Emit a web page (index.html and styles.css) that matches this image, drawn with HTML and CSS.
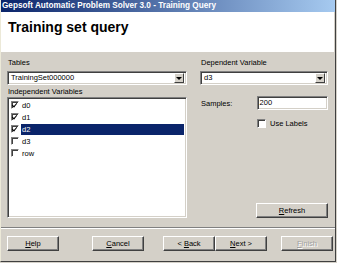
FILE: index.html
```html
<!DOCTYPE html>
<html lang="en">
<head>
  <meta charset="UTF-8">
  <title>Training Query</title>
  <link rel="stylesheet" href="styles.css">
</head>
<body>
  <div class="window">
    <div class="titlebar">Gepsoft Automatic Problem Solver 3.0 - Training Query</div>

    <!-- Wizard header -->
    <div class="header">
      <h1>Training set query</h1>
    </div>

    <div class="content">
      <div class="panel">
        <!-- Left column -->
        <div class="col-left">
          <div class="label">Tables</div>
          <div class="combo">
            <span class="combo-text">TrainingSet000000</span>
            <span class="combo-btn"><span class="arrow"></span></span>
          </div>
          <div class="label label-gap">Independent Variables</div>
          <div class="listbox">
            <div class="item"><span class="check checked"></span><span class="item-text">d0</span></div>
            <div class="item"><span class="check checked"></span><span class="item-text">d1</span></div>
            <div class="item"><span class="check checked"></span><span class="item-text selected">d2</span></div>
            <div class="item"><span class="check"></span><span class="item-text">d3</span></div>
            <div class="item"><span class="check"></span><span class="item-text">row</span></div>
          </div>
        </div>

        <!-- Right column -->
        <div class="col-right">
          <div class="label">Dependent Variable</div>
          <div class="combo">
            <span class="combo-text">d3</span>
            <span class="combo-btn"><span class="arrow"></span></span>
          </div>
          <div class="samples-row">
            <span class="samples-label">Samples:</span>
            <div class="textbox">200</div>
          </div>
          <div class="labels-row">
            <span class="check"></span><span>Use Labels</span>
          </div>
          <div class="spacer"></div>
          <div class="refresh-row">
            <button class="btn btn-refresh"><u>R</u>efresh</button>
          </div>
        </div>
      </div>

      <div class="separator"></div>

      <div class="buttons">
        <button class="btn"><u>H</u>elp</button>
        <button class="btn btn-cancel"><u>C</u>ancel</button>
        <button class="btn btn-back">&lt; <u>B</u>ack</button>
        <button class="btn"><u>N</u>ext &gt;</button>
        <button class="btn btn-finish" disabled><u>F</u>inish</button>
      </div>
    </div>
  </div>
</body>
</html>
```

FILE: styles.css
```css
body {
  margin: 0;
  width: 337px;
  height: 263px;
  overflow: hidden;
  background-color: #d4d0c8;
  font-family: "Liberation Sans", Arial, sans-serif;
  font-size: 7.5px;
  color: #000;
}
.window {
  width: 334px;
  height: 261px;
  border-left: 1px solid #ece9d8;
  border-right: 1px solid #404040;
  border-bottom: 1px solid #404040;
  display: flex;
  flex-direction: column;
  background-color: #d4d0c8;
}
.titlebar {
  height: 12px;
  line-height: 12px;
  padding-left: 1px;
  color: #fff;
  font-size: 8.2px;
  font-weight: bold;
  background: linear-gradient(to right, #0a246a, #a6caf0);
  white-space: nowrap;
}
.header {
  height: 40px;
  background-color: #fff;
  border-right: 1px solid #d4d0c8;
}
.header h1 {
  margin: 0;
  padding: 7px 0 0 7px;
  font-size: 14px;
  line-height: 16px;
  font-weight: bold;
}
.content {
  flex: 1;
  display: flex;
  flex-direction: column;
}
.panel {
  display: flex;
  gap: 13px;
  padding: 5px 0 0 6px;
  height: 170px;
}
.col-left {
  width: 180px;
  display: flex;
  flex-direction: column;
}
.col-right {
  width: 128px;
  display: flex;
  flex-direction: column;
}
.label {
  height: 11px;
  line-height: 11px;
  padding-left: 1px;
}
.label-gap {
  margin-top: 1px;
}
.combo {
  height: 14px;
  margin-top: 3px;
  box-sizing: border-box;
  border-top: 1px solid #808080;
  border-left: 1px solid #808080;
  border-right: 1px solid #fff;
  border-bottom: 1px solid #fff;
  box-shadow: inset 1px 1px 0 #404040, inset -1px -1px 0 #d4d0c8;
  background-color: #fff;
  display: flex;
  align-items: center;
  justify-content: space-between;
  padding: 0 2px 0 3px;
}
.combo-text {
  line-height: 12px;
}
.combo-btn {
  width: 10px;
  height: 10px;
  box-sizing: border-box;
  background-color: #d4d0c8;
  border-top: 1px solid #fff;
  border-left: 1px solid #fff;
  border-right: 1px solid #404040;
  border-bottom: 1px solid #404040;
  display: flex;
  align-items: center;
  justify-content: center;
}
.arrow {
  width: 0;
  height: 0;
  border-left: 3px solid transparent;
  border-right: 3px solid transparent;
  border-top: 3px solid #000;
}
.listbox {
  height: 121px;
  box-sizing: border-box;
  border-top: 1px solid #808080;
  border-left: 1px solid #808080;
  border-right: 1px solid #fff;
  border-bottom: 1px solid #fff;
  box-shadow: inset 1px 1px 0 #404040, inset -1px -1px 0 #d4d0c8;
  background-color: #fff;
  padding: 1px 2px 0 3px;
}
.item {
  height: 12px;
  display: flex;
  align-items: center;
}
.check {
  width: 8px;
  height: 8px;
  box-sizing: border-box;
  border-top: 1px solid #808080;
  border-left: 1px solid #808080;
  border-right: 1px solid #fff;
  border-bottom: 1px solid #fff;
  box-shadow: inset 1px 1px 0 #404040;
  background-color: #fff;
  position: relative;
  flex: none;
}
.check.checked::after {
  content: "";
  position: absolute;
  left: 1px;
  top: 0px;
  width: 2px;
  height: 4px;
  border-right: 1.5px solid #000;
  border-bottom: 1.5px solid #000;
  transform: rotate(40deg);
}
.item-text {
  margin-left: 2px;
  padding-left: 1px;
  line-height: 11px;
  flex: 1;
}
.item-text.selected {
  background-color: #0a246a;
  color: #fff;
}
.samples-row {
  display: flex;
  align-items: center;
  margin-top: 11px;
}
.samples-label {
  width: 56px;
  padding-left: 1px;
}
.textbox {
  width: 72px;
  height: 14px;
  box-sizing: border-box;
  border-top: 1px solid #808080;
  border-left: 1px solid #808080;
  border-right: 1px solid #fff;
  border-bottom: 1px solid #fff;
  box-shadow: inset 1px 1px 0 #404040, inset -1px -1px 0 #d4d0c8;
  background-color: #fff;
  padding-left: 2px;
  line-height: 12px;
}
.labels-row {
  display: flex;
  align-items: center;
  gap: 4px;
  margin-top: 9px;
  padding-left: 57px;
}
.labels-row .check {
  width: 9px;
  height: 9px;
}
.spacer {
  flex: 1;
}
.refresh-row {
  display: flex;
  justify-content: flex-end;
  margin-bottom: 9px;
}
.separator {
  height: 0;
  border-top: 1px solid #808080;
  border-bottom: 1px solid #fff;
}
.buttons {
  display: flex;
  padding: 7px 0 0 6px;
}
.btn {
  width: 52px;
  height: 15px;
  box-sizing: border-box;
  padding: 0;
  font-family: "Liberation Sans", Arial, sans-serif;
  font-size: 7.5px;
  color: #000;
  background-color: #d4d0c8;
  border-top: 1px solid #fff;
  border-left: 1px solid #fff;
  border-right: 1px solid #404040;
  border-bottom: 1px solid #404040;
  box-shadow: inset -1px -1px 0 #808080;
}
.btn-refresh {
  width: 72px;
}
.btn-cancel {
  margin-left: 33px;
}
.btn-back {
  margin-left: 19px;
}
.btn-finish {
  margin-left: 14px;
  color: #a0a0a0;
  text-shadow: 1px 1px 0 #fff;
}
```
